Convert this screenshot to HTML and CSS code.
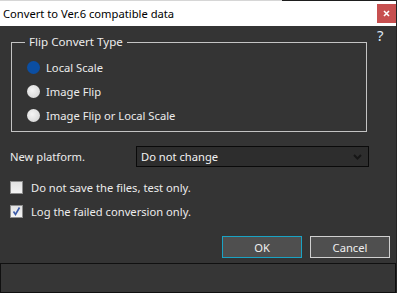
FILE: index.html
```html
<!DOCTYPE html>
<html lang="en">
<head>
    <meta charset="UTF-8">
    <title>Convert to Ver.6 compatible data</title>
    <link rel="stylesheet" href="styles.css">
</head>
<body>
    <div class="window">
        <div class="titlebar">
            <span class="title">Convert to Ver.6 compatible data</span>
            <button class="close" type="button" aria-label="Close">
                <svg width="7" height="7" viewBox="0 0 7 7"><path d="M1 1L6 6M6 1L1 6" stroke="#fff" stroke-width="1.6"/></svg>
            </button>
        </div>

        <div class="content">
            <div class="top-row">
                <fieldset class="group">
                    <legend>Flip Convert Type</legend>
                    <label class="radio-row"><span class="radio checked"></span>Local Scale</label>
                    <label class="radio-row"><span class="radio"></span>Image Flip</label>
                    <label class="radio-row"><span class="radio"></span>Image Flip or Local Scale</label>
                </fieldset>
                <span class="help">?</span>
            </div>

            <div class="platform-row">
                <span class="platform-label">New platform.</span>
                <div class="select">
                    <span>Do not change</span>
                    <svg width="9" height="6" viewBox="0 0 9 6"><path d="M1 1L4.5 4.5L8 1" fill="none" stroke="#161616" stroke-width="2"/></svg>
                </div>
            </div>

            <label class="check-row"><span class="checkbox"></span>Do not save the files, test only.</label>
            <label class="check-row"><span class="checkbox">
                <svg width="11" height="11" viewBox="0 0 11 11"><path d="M2.5 5.5L4.5 8.5L8.5 1.5" fill="none" stroke="#3b5aa8" stroke-width="1.6"/></svg>
            </span>Log the failed conversion only.</label>

            <div class="buttons">
                <button class="btn btn-ok" type="button">OK</button>
                <button class="btn" type="button">Cancel</button>
            </div>
        </div>

        <div class="statusbar"></div>
    </div>
</body>
</html>
```

FILE: styles.css
```css
body {
    margin: 0;
    font-family: "Noto Sans", "Open Sans", sans-serif;
    font-size: 11.2px;
    background-color: #343434;
    color: #ececec;
}
.window {
    width: 397px;
    height: 293px;
    display: flex;
    flex-direction: column;
    background-color: #343434;
    box-sizing: border-box;
    border-right: 1px solid #242424;
    overflow: hidden;
}
.titlebar {
    height: 26px;
    display: flex;
    align-items: center;
    justify-content: space-between;
    background: linear-gradient(to right, #d6d6d6 282px, #1e1e1e 282px) top / 100% 1px no-repeat, #ffffff;
    color: #000000;
}
.title {
    padding-left: 3px;
    font-size: 11.2px;
}
.close {
    width: 19px;
    height: 19px;
    margin-right: 0;
    padding: 0;
    border: none;
    background-color: #c75050;
    display: flex;
    align-items: center;
    justify-content: center;
}
.content {
    flex: 1;
    padding-top: 8px;
}
.top-row {
    display: flex;
    align-items: flex-start;
}
.group {
    margin: 0 0 0 11px;
    width: 356px;
    height: 98px;
    box-sizing: border-box;
    padding: 5px 0 0 15px;
    border: 1px solid #c4c4c4;
}
.group legend {
    margin-left: -2px;
    padding: 0 4px;
    line-height: 16px;
    font-size: 11.6px;
    color: #ececec;
}
.radio-row {
    display: flex;
    align-items: center;
    gap: 6px;
    height: 24px;
}
.radio {
    width: 13px;
    height: 13px;
    border-radius: 50%;
    background: radial-gradient(circle at 40% 40%, #f4f4f4, #cfcfcf);
}
.radio.checked {
    background: #0b4ea2;
}
.help {
    margin: -7px 0 0 10px;
    font-size: 15px;
    line-height: 16px;
    color: #dde6f2;
}
.platform-row {
    display: flex;
    align-items: center;
    margin-top: 14px;
    padding-left: 10px;
}
.platform-label {
    width: 126px;
}
.select {
    width: 233px;
    height: 21px;
    box-sizing: border-box;
    border: 1px solid #0a0a0a;
    background-color: #2d2d2d;
    display: flex;
    align-items: center;
    justify-content: space-between;
    padding: 0 6px 0 4px;
    color: #f2f2f2;
}
.check-row {
    display: flex;
    align-items: center;
    gap: 8px;
    height: 24px;
    padding-left: 10px;
}
.check-row:first-of-type {
    margin-top: 8px;
}
.checkbox {
    width: 13px;
    height: 13px;
    box-sizing: border-box;
    border: 1px solid #8c8c8c;
    background: linear-gradient(#e2e2e2, #f4f4f4);
    display: flex;
    align-items: center;
    justify-content: center;
}
.buttons {
    display: flex;
    justify-content: flex-end;
    gap: 8px;
    margin-top: 13px;
    padding-right: 6px;
}
.btn {
    width: 80px;
    height: 22px;
    border: 1px solid #d0d0d0;
    background-color: #4f4f4f;
    color: #f0f0f0;
    font-family: inherit;
    font-size: 11.2px;
    padding: 0;
}
.btn-ok {
    border-color: #1aa3c4;
}
.statusbar {
    height: 30px;
    box-sizing: border-box;
    border: 1px solid #101010;
    background-color: #363636;
}
```
